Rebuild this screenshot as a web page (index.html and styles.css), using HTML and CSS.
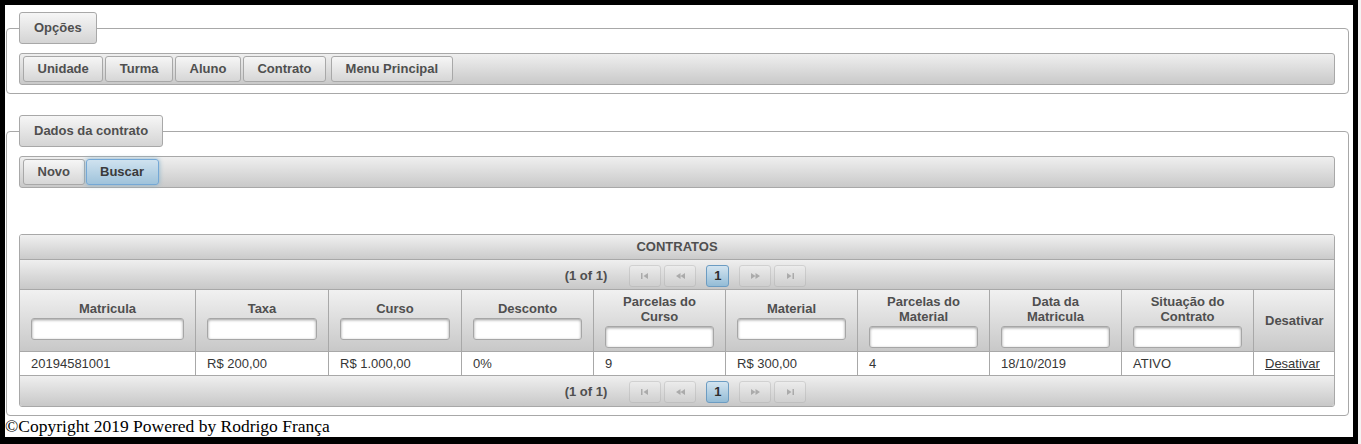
FILE: index.html
```html
<!DOCTYPE html>
<html lang="pt-BR">
<head>
<meta charset="utf-8">
<title>Contratos</title>
<link rel="stylesheet" href="styles.css">
</head>
<body>
<div class="frame">
  <form class="page">
    <fieldset class="panel panel-opcoes">
      <legend class="legend">Opções</legend>
      <div class="toolbar">
        <button type="button" class="btn">Unidade</button>
        <button type="button" class="btn">Turma</button>
        <button type="button" class="btn">Aluno</button>
        <button type="button" class="btn">Contrato</button>
        <button type="button" class="btn btn-sep">Menu Principal</button>
      </div>
    </fieldset>

    <fieldset class="panel panel-dados">
      <legend class="legend">Dados da contrato</legend>
      <div class="toolbar toolbar-tight">
        <button type="button" class="btn">Novo</button>
        <button type="button" class="btn btn-focus">Buscar</button>
      </div>

      <div class="datatable">
        <div class="dt-caption">CONTRATOS</div>
        <div class="paginator">
          <span class="pg-report">(1 of 1)</span>
          <span class="pg-btn pg-disabled"><svg width="8" height="6" viewBox="0 0 8 6"><rect x="0" y="0" width="1.5" height="6" fill="#555"/><path d="M7 0 L2.5 3 L7 6 Z" fill="#555"/></svg></span>
          <span class="pg-btn pg-disabled pg-gap-l"><svg width="9" height="6" viewBox="0 0 9 6"><path d="M4.5 0 L0 3 L4.5 6 Z M9 0 L4.5 3 L9 6 Z" fill="#555"/></svg></span>
          <span class="pg-page">1</span>
          <span class="pg-btn pg-disabled"><svg width="9" height="6" viewBox="0 0 9 6"><path d="M0 0 L4.5 3 L0 6 Z M4.5 0 L9 3 L4.5 6 Z" fill="#555"/></svg></span>
          <span class="pg-btn pg-disabled pg-gap-s"><svg width="8" height="6" viewBox="0 0 8 6"><path d="M1 0 L5.5 3 L1 6 Z" fill="#555"/><rect x="6.5" y="0" width="1.5" height="6" fill="#555"/></svg></span>
        </div>

        <div class="dt-grid">
          <div class="th"><span class="th-title">Matricula</span><input class="filter" type="text"></div>
          <div class="th"><span class="th-title">Taxa</span><input class="filter" type="text"></div>
          <div class="th"><span class="th-title">Curso</span><input class="filter" type="text"></div>
          <div class="th"><span class="th-title">Desconto</span><input class="filter" type="text"></div>
          <div class="th"><span class="th-title">Parcelas do Curso</span><input class="filter" type="text"></div>
          <div class="th"><span class="th-title">Material</span><input class="filter" type="text"></div>
          <div class="th"><span class="th-title">Parcelas do Material</span><input class="filter" type="text"></div>
          <div class="th"><span class="th-title">Data da<br>Matricula</span><input class="filter" type="text"></div>
          <div class="th"><span class="th-title">Situação do Contrato</span><input class="filter" type="text"></div>
          <div class="th"><span class="th-title">Desativar</span></div>

          <div class="td">20194581001</div>
          <div class="td">R$ 200,00</div>
          <div class="td">R$ 1.000,00</div>
          <div class="td">0%</div>
          <div class="td">9</div>
          <div class="td">R$ 300,00</div>
          <div class="td">4</div>
          <div class="td">18/10/2019</div>
          <div class="td">ATIVO</div>
          <div class="td"><a class="link" href="#">Desativar</a></div>
        </div>

        <div class="paginator paginator-bottom">
          <span class="pg-report">(1 of 1)</span>
          <span class="pg-btn pg-disabled"><svg width="8" height="6" viewBox="0 0 8 6"><rect x="0" y="0" width="1.5" height="6" fill="#555"/><path d="M7 0 L2.5 3 L7 6 Z" fill="#555"/></svg></span>
          <span class="pg-btn pg-disabled pg-gap-l"><svg width="9" height="6" viewBox="0 0 9 6"><path d="M4.5 0 L0 3 L4.5 6 Z M9 0 L4.5 3 L9 6 Z" fill="#555"/></svg></span>
          <span class="pg-page">1</span>
          <span class="pg-btn pg-disabled"><svg width="9" height="6" viewBox="0 0 9 6"><path d="M0 0 L4.5 3 L0 6 Z M4.5 0 L9 3 L4.5 6 Z" fill="#555"/></svg></span>
          <span class="pg-btn pg-disabled pg-gap-s"><svg width="8" height="6" viewBox="0 0 8 6"><path d="M1 0 L5.5 3 L1 6 Z" fill="#555"/><rect x="6.5" y="0" width="1.5" height="6" fill="#555"/></svg></span>
        </div>
      </div>
    </fieldset>
  </form>
  <div class="footer">©Copyright 2019 Powered by Rodrigo França</div>
</div>
</body>
</html>
```

FILE: styles.css
```css
html {
  height: 100%;
  background: linear-gradient(to right, #000 1358px, #f4f4f4 1358px);
}

body {
  margin: 0;
  font-family: "Liberation Serif", "Times New Roman", serif;
}

.frame {
  margin: 5px 0 0 5px;
  width: 1348px;
  height: 432px;
  background: #fff;
  overflow: hidden;
}

.page {
  margin: 0;
  padding: 0 0 0 1px;
  font-family: "Liberation Sans", Arial, sans-serif;
  font-size: 13px;
  color: #4f4f4f;
}

.panel {
  box-sizing: border-box;
  width: 1343px;
  min-width: 0;
  margin: 0;
  padding: 9px 13px 8px 12px;
  border: 1px solid #a8a8a8;
  border-radius: 4px;
}

.panel-opcoes {
  margin-top: 7px;
}

.panel-dados {
  margin-top: 21px;
}

.legend {
  box-sizing: border-box;
  height: 32px;
  padding: 8px 14px;
  line-height: 14px;
  font-weight: bold;
  color: #4f4f4f;
  border: 1px solid #a8a8a8;
  border-radius: 3px;
  background: linear-gradient(#f6f6f6, #d4d4d4);
}

.toolbar {
  box-sizing: border-box;
  height: 32px;
  display: flex;
  align-items: center;
  gap: 2px;
  padding: 2px 3px;
  border: 1px solid #a8a8a8;
  border-radius: 3px;
  background: linear-gradient(#efefef, #c9c9c9);
}

.toolbar-tight {
  gap: 1px;
}

.btn {
  box-sizing: border-box;
  height: 26px;
  margin: 0;
  padding: 0 13.5px;
  font-family: "Liberation Sans", Arial, sans-serif;
  font-size: 13px;
  font-weight: bold;
  line-height: 24px;
  color: #4f4f4f;
  border: 1px solid #a8a8a8;
  border-radius: 3px;
  background: linear-gradient(#f6f6f6, #d6d6d6);
}

.btn-sep {
  margin-left: 3px;
}

.btn-focus {
  border-color: #74a8d6;
  background: linear-gradient(#cfe2ef, #9fc3db);
  box-shadow: 0 0 5px #85b2cb;
  color: #3a3a3a;
}

.datatable {
  margin-top: 46px;
  border: 1px solid #a8a8a8;
  border-radius: 3px;
  overflow: hidden;
}

.dt-caption {
  box-sizing: border-box;
  height: 25px;
  border-bottom: 1px solid #a8a8a8;
  background: linear-gradient(#f0f0f0, #cbcbcb);
  text-align: center;
  font-weight: bold;
  line-height: 24px;
  color: #4f4f4f;
}

.paginator {
  box-sizing: border-box;
  height: 30px;
  display: flex;
  align-items: center;
  justify-content: center;
  padding: 2px 0 0 17px;
  border-bottom: 1px solid #a8a8a8;
  background: linear-gradient(#efefef, #c8c8c8);
}

.paginator-bottom {
  border-bottom: 0;
  padding-top: 1px;
}

.pg-report {
  font-weight: bold;
  color: #4f4f4f;
  margin-right: 22px;
}

.pg-btn {
  box-sizing: border-box;
  width: 32px;
  height: 22px;
  display: flex;
  align-items: center;
  justify-content: center;
  border: 1px solid #a8a8a8;
  border-radius: 3px;
  background: linear-gradient(#f6f6f6, #d6d6d6);
}

.pg-disabled {
  opacity: 0.35;
}

.pg-gap-l {
  margin-left: 3px;
}

.pg-gap-s {
  margin-left: 3px;
}

.pg-page {
  box-sizing: border-box;
  width: 23px;
  height: 22px;
  margin: 0 10px;
  display: flex;
  align-items: center;
  justify-content: center;
  font-weight: bold;
  color: #2e2e2e;
  border: 1px solid #6c9cc2;
  border-radius: 3px;
  background: linear-gradient(#d3e4f0, #94bcd6);
}

.dt-grid {
  display: grid;
  grid-template-columns: 176px 133px 133px repeat(6, 132px) 80px;
}

.th,
.td {
  box-sizing: border-box;
  border-right: 1px solid #a8a8a8;
  border-bottom: 1px solid #a8a8a8;
  min-width: 0;
}

.dt-grid > :nth-child(10n) {
  border-right: 0;
}

.th {
  height: 62px;
  padding: 0 11px;
  display: flex;
  flex-direction: column;
  align-items: stretch;
  justify-content: center;
  text-align: center;
  font-weight: bold;
  line-height: 15px;
  color: #4f4f4f;
  background: linear-gradient(#f1f1f1, #c8c8c8);
}

.th-title {
  display: block;
}

.filter {
  box-sizing: border-box;
  width: 100%;
  height: 22px;
  margin: 2px 0 0;
  padding: 0 4px;
  border: 1px solid #a6a6a6;
  border-radius: 3px;
  background: #fff;
  box-shadow: inset 0 1px 3px rgba(0, 0, 0, 0.4);
}

.td {
  height: 24px;
  padding: 0 11px;
  line-height: 23px;
  color: #363636;
  background: #fff;
  white-space: nowrap;
}

.link {
  color: #363636;
  text-decoration: underline;
}

.footer {
  font-family: "Liberation Serif", "Times New Roman", serif;
  font-size: 17.5px;
  line-height: 20px;
  color: #000;
}
```
